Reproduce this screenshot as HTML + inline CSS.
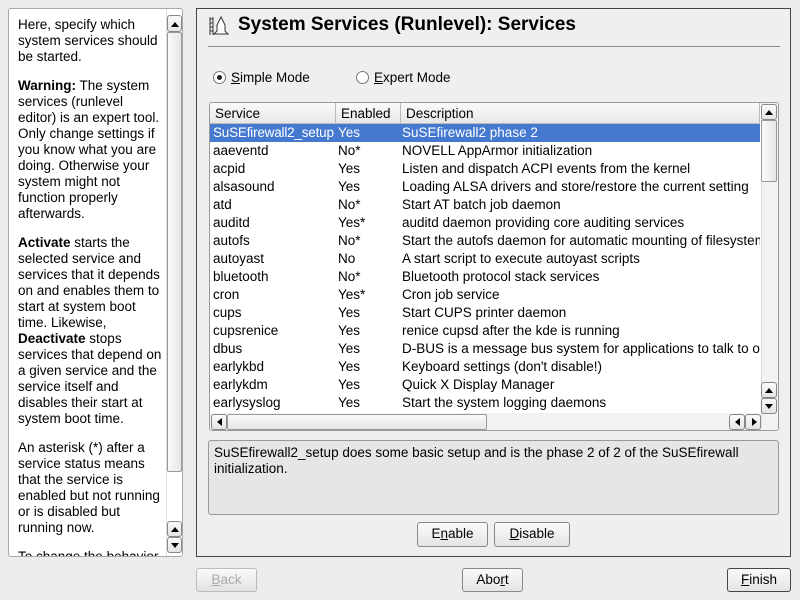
<!DOCTYPE html>
<html><head><style>
*{box-sizing:border-box;margin:0;padding:0}
body{width:800px;height:600px;overflow:hidden;background:#ececec;font-family:"Liberation Sans","DejaVu Sans",sans-serif;font-size:13.5px;color:#000;position:relative}
.abs{position:absolute}
.left{left:8px;top:8px;width:175px;height:549px;background:#fff;border:1px solid #a8a8a8;border-radius:3px;overflow:hidden}
.left .txt{position:absolute;left:9px;top:8px;width:149px;line-height:16px;font-size:13.5px}
.left p{margin-bottom:13px}
.vs{background:#f2f2f2;border-left:1px solid #ddd}
.thumb{background:linear-gradient(90deg,#fafafa,#e6e6e6);border:1px solid #999;border-radius:2px}
.btn{background:linear-gradient(#fafafa,#e4e4e4);border:1px solid #888;border-radius:3px;text-align:center;line-height:22px;font-size:13.5px}
.right{left:196px;top:8px;width:595px;height:549px;background:#efefef;border:1px solid #444}
.list{left:209px;top:102px;width:570px;height:329px;background:#fff;border:1px solid #999;border-radius:3px;overflow:hidden}
.row{position:absolute;left:0;height:18px;line-height:18px;width:550px;white-space:nowrap;overflow:hidden}
.row span{position:absolute}
.c1{left:3px}.c2{left:128px}.c3{left:192px}
.sel{background:#4479cf;color:#fff}
.hdr{position:absolute;top:0;left:0;width:550px;height:21px;background:linear-gradient(#fbfbfb,#e6e6e6);border-bottom:1px solid #bbb;line-height:21px}
.hdr span{position:absolute;top:0;height:21px;border-right:1px solid #bbb;padding-left:5px}
.arrow{width:0;height:0;border-left:4px solid transparent;border-right:4px solid transparent;position:absolute;left:4px}
</style></head><body>
<div class="abs left">
 <div class="txt">
 <p>Here, specify which system services should be started.</p>
 <p><b>Warning:</b> The system services (runlevel<br>editor) is an expert tool. Only change settings if you know what you are doing. Otherwise your system might not function properly afterwards.</p>
 <p><b>Activate</b> starts the selected service and services that it depends on and enables them to start at system boot time. Likewise, <b>Deactivate</b> stops services that depend on a given service and the service itself and disables their start at system boot time.</p>
 <p>An asterisk (*) after a service status means that the service is enabled but not running or is disabled but running now.</p>
 <p>To change the behavior</p>
 </div>
 <div class="abs vs" style="left:157px;top:0;width:17px;height:547px;background:#fff"></div>
 <div class="abs btn" style="left:158px;top:6px;width:15px;height:17px"><div class="arrow" style="top:6px;border-bottom:5px solid #000;left:3px"></div></div>
 <div class="abs thumb" style="left:158px;top:23px;width:15px;height:440px"></div>
 <div class="abs btn" style="left:158px;top:512px;width:15px;height:16px"><div class="arrow" style="top:5px;border-bottom:5px solid #000;left:3px"></div></div>
 <div class="abs btn" style="left:158px;top:528px;width:15px;height:16px"><div class="arrow" style="top:5px;border-top:5px solid #000;left:3px"></div></div>
</div>
<div class="abs right"></div>
<svg class="abs" style="left:208px;top:15px" width="22" height="22" viewBox="0 0 22 22"><path d="M2 2v18M5 2v18M2 4h3M2 8h3M2 12h3M2 16h3" stroke="#333" fill="none"/><path d="M13 2l4 8v6l3 3h-14l3-3v-6z" fill="#fff" stroke="#333"/></svg>
<div class="abs" style="left:238px;top:14px;font-size:19px;font-weight:bold">System Services (Runlevel): Services</div>
<div class="abs" style="left:208px;top:46px;width:572px;height:1px;background:#888"></div>
<div class="abs" style="left:213px;top:71px;width:13px;height:13px;border:1px solid #777;border-radius:50%;background:#fff"><div class="abs" style="left:3px;top:3px;width:5px;height:5px;border-radius:50%;background:#222"></div></div>
<div class="abs" style="left:231px;top:70px"><u>S</u>imple Mode</div>
<div class="abs" style="left:356px;top:71px;width:13px;height:13px;border:1px solid #777;border-radius:50%;background:#fff"></div>
<div class="abs" style="left:374px;top:70px"><u>E</u>xpert Mode</div>
<div class="abs list">
 <div class="hdr"><span style="left:0;width:126px">Service</span><span style="left:126px;width:65px">Enabled</span><span style="left:191px;width:359px">Description</span></div>
 <div class="row sel" style="top:21px"><span class="c1" style="letter-spacing:-0.2px">SuSEfirewall2_setup</span><span class="c2">Yes</span><span class="c3">SuSEfirewall2 phase 2</span></div>
 <div class="row" style="top:39px"><span class="c1">aaeventd</span><span class="c2">No*</span><span class="c3">NOVELL AppArmor initialization</span></div>
 <div class="row" style="top:57px"><span class="c1">acpid</span><span class="c2">Yes</span><span class="c3">Listen and dispatch ACPI events from the kernel</span></div>
 <div class="row" style="top:75px"><span class="c1">alsasound</span><span class="c2">Yes</span><span class="c3">Loading ALSA drivers and store/restore the current setting</span></div>
 <div class="row" style="top:93px"><span class="c1">atd</span><span class="c2">No*</span><span class="c3">Start AT batch job daemon</span></div>
 <div class="row" style="top:111px"><span class="c1">auditd</span><span class="c2">Yes*</span><span class="c3">auditd daemon providing core auditing services</span></div>
 <div class="row" style="top:129px"><span class="c1">autofs</span><span class="c2">No*</span><span class="c3">Start the autofs daemon for automatic mounting of filesystems</span></div>
 <div class="row" style="top:147px"><span class="c1">autoyast</span><span class="c2">No</span><span class="c3">A start script to execute autoyast scripts</span></div>
 <div class="row" style="top:165px"><span class="c1">bluetooth</span><span class="c2">No*</span><span class="c3">Bluetooth protocol stack services</span></div>
 <div class="row" style="top:183px"><span class="c1">cron</span><span class="c2">Yes*</span><span class="c3">Cron job service</span></div>
 <div class="row" style="top:201px"><span class="c1">cups</span><span class="c2">Yes</span><span class="c3">Start CUPS printer daemon</span></div>
 <div class="row" style="top:219px"><span class="c1">cupsrenice</span><span class="c2">Yes</span><span class="c3">renice cupsd after the kde is running</span></div>
 <div class="row" style="top:237px"><span class="c1">dbus</span><span class="c2">Yes</span><span class="c3">D-BUS is a message bus system for applications to talk to one</span></div>
 <div class="row" style="top:255px"><span class="c1">earlykbd</span><span class="c2">Yes</span><span class="c3">Keyboard settings (don't disable!)</span></div>
 <div class="row" style="top:273px"><span class="c1">earlykdm</span><span class="c2">Yes</span><span class="c3">Quick X Display Manager</span></div>
 <div class="row" style="top:291px"><span class="c1">earlysyslog</span><span class="c2">Yes</span><span class="c3">Start the system logging daemons</span></div>
 <div class="abs vs" style="left:551px;top:0;width:17px;height:327px"></div>
 <div class="abs btn" style="left:551px;top:1px;width:16px;height:16px"><div class="arrow" style="top:5px;border-bottom:5px solid #000;left:3px"></div></div>
 <div class="abs thumb" style="left:551px;top:17px;width:16px;height:62px"></div>
 <div class="abs btn" style="left:551px;top:279px;width:16px;height:16px"><div class="arrow" style="top:5px;border-bottom:5px solid #000;left:3px"></div></div>
 <div class="abs btn" style="left:551px;top:295px;width:16px;height:16px"><div class="arrow" style="top:5px;border-top:5px solid #000;left:3px"></div></div>
 <div class="abs" style="left:0;top:310px;width:551px;height:17px;background:#f2f2f2"></div>
 <div class="abs btn" style="left:1px;top:311px;width:16px;height:16px"><div class="arrow" style="top:3px;left:5px;border:4px solid transparent;border-right:5px solid #000;border-left:0"></div></div>
 <div class="abs thumb" style="left:17px;top:311px;width:260px;height:16px;background:linear-gradient(#fafafa,#e6e6e6)"></div>
 <div class="abs btn" style="left:519px;top:311px;width:16px;height:16px"><div class="arrow" style="top:3px;left:5px;border:4px solid transparent;border-right:5px solid #000;border-left:0"></div></div>
 <div class="abs btn" style="left:535px;top:311px;width:16px;height:16px"><div class="arrow" style="top:3px;left:6px;border:4px solid transparent;border-left:5px solid #000;border-right:0"></div></div>
</div>
<div class="abs" style="left:208px;top:440px;width:571px;height:75px;background:#e6e6e6;border:1px solid #999;border-radius:3px;padding:4px 5px;line-height:16px">SuSEfirewall2_setup does some basic setup and is the phase 2 of 2 of the SuSEfirewall initialization.</div>
<div class="abs btn" style="left:417px;top:522px;width:71px;height:25px">E<u>n</u>able</div>
<div class="abs btn" style="left:494px;top:522px;width:76px;height:25px"><u>D</u>isable</div>
<div class="abs btn" style="left:196px;top:568px;width:61px;height:24px;color:#aaa;border-color:#bbb"><u>B</u>ack</div>
<div class="abs btn" style="left:462px;top:568px;width:61px;height:24px">Abo<u>r</u>t</div>
<div class="abs btn" style="left:727px;top:568px;width:64px;height:24px;border-color:#444"><u>F</u>inish</div>
</body></html>
